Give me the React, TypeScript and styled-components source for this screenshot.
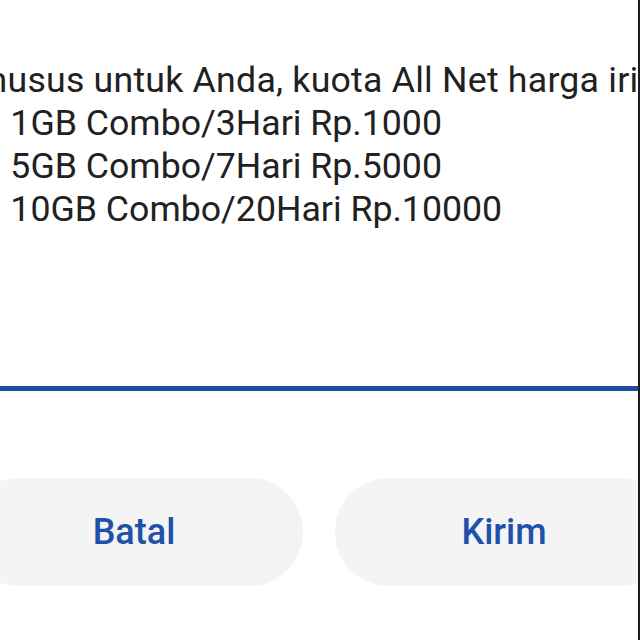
import React from "react";
import styled, { createGlobalStyle } from "styled-components";

const GlobalStyle = createGlobalStyle`
  html, body {
    margin: 0;
    padding: 0;
    background: #ffffff;
  }
  body {
    font-family: Roboto, "Noto Sans", "Liberation Sans", sans-serif;
  }
`;

const Screen = styled.div`
  width: 638px;
  height: 640px;
  border-right: 2px solid #1b1b1b;
  background: #ffffff;
  overflow: hidden;
  display: flex;
`;

const Dialog = styled.div`
  flex: none;
  width: 712px;
  margin-left: -35px;
  display: flex;
  flex-direction: column;
`;

const Message = styled.div`
  padding: 59px 0 0 7px;
  display: flex;
  flex-direction: column;
`;

const Line = styled.div<{ $indent?: number; $tracking?: number }>`
  margin-left: ${(p) => p.$indent ?? 0}px;
  letter-spacing: ${(p) => p.$tracking ?? 0}px;
  font-size: 35.7px;
  line-height: 43px;
  color: #212121;
  white-space: nowrap;
`;

const Field = styled.div`
  height: 155px;
  border-bottom: 5px solid #1f4d9e;
`;

const ButtonRow = styled.div`
  margin-top: 87px;
  display: flex;
  gap: 32px;
`;

const ActionButton = styled.button`
  flex: none;
  width: 338px;
  height: 108px;
  border: none;
  border-radius: 54px;
  background: #f4f4f4;
  color: #1f50aa;
  font-family: Roboto, "Noto Sans", "Liberation Sans", sans-serif;
  font-size: 36px;
  font-weight: 500;
  padding: 0;
  cursor: pointer;
`;

const lines: { text: string; indent?: number; tracking?: number }[] = [
  { text: "Khusus untuk Anda, kuota All Net harga irit:", indent: -7, tracking: 0.22 },
  { text: "1. 1GB Combo/3Hari Rp.1000" },
  { text: "2. 5GB Combo/7Hari Rp.5000" },
  { text: "3. 10GB Combo/20Hari Rp.10000" },
];

export default function App() {
  return (
    <>
      <GlobalStyle />
      <Screen>
        <Dialog>
          <Message>
            {lines.map((l) => (
              <Line key={l.text} $indent={l.indent} $tracking={l.tracking}>
                {l.text}
              </Line>
            ))}
          </Message>
          <Field />
          <ButtonRow>
            <ActionButton>Batal</ActionButton>
            <ActionButton>Kirim</ActionButton>
          </ButtonRow>
        </Dialog>
      </Screen>
    </>
  );
}
